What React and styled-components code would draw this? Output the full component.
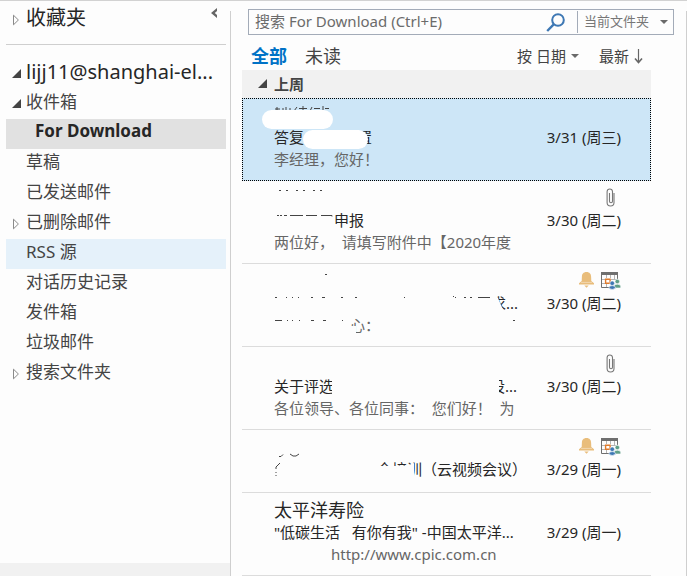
import styled, { createGlobalStyle, css } from 'styled-components'

const GlobalStyle = createGlobalStyle`
  * {
    box-sizing: border-box;
  }

  body {
    margin: 0;
    background: #fdfdfd;
    color: #262626;
    font-family: "Noto Sans", "Noto Sans CJK SC", sans-serif;
    font-size: 15px;
  }

  button, input, select {
    font-family: inherit;
    color: inherit;
    border: 0;
    padding: 0;
    background: none;
  }
`;

const Page = styled.div`
  display: grid;
  grid-template-columns: 230px 1px minmax(0, 1fr) 1px;
  min-height: 100vh;
  border-top: 1px solid #d2d2d2;
`;

const Divider = styled.div`
  margin-top: 10px;
  background: #cfcfcf;
`;

/* ---------- folder pane ---------- */

const Sidebar = styled.aside`
  display: flex;
  flex-direction: column;
`;

const FolderNav = styled.nav`
  flex: 1;
  padding: 0 4px 0 6px;
`;

const Favorites = styled.div`
  display: flex;
  align-items: flex-start;
  justify-content: space-between;
  height: 44px;
  margin-bottom: 10px;
  border-bottom: 1px solid #cfcfcf;
`;

const CollapseButton = styled.button`
  display: flex;
  padding: 7px 9px;
`;

const Folder = styled.a`
  display: flex;
  align-items: center;
  height: 30px;
  padding-bottom: 4px;
  font-size: 17px;
  line-height: 24px;
  white-space: nowrap;
  text-decoration: none;
  color: #444;

  ${({ $top }) => $top && css`
    height: 34px;
    padding-bottom: 0;
    font-size: 20px;
    color: #262626;
  `}
  ${({ $hover }) => $hover && css`
    background: #e5f1fa;
  `}
  ${({ $selected }) => $selected && css`
    padding-left: 9px;
    padding-bottom: 6px;
    background: #e1e1e1;
    font-weight: 700;
    color: #262626;
  `}
`;

const Toggle = styled.span`
  display: flex;
  align-items: center;
  width: 20px;
  padding: 3px 0 0 6px;
`;

const SidebarFooter = styled.div`
  height: 13px;
  background: #f1f1f1;
`;

/* ---------- message pane ---------- */

const Main = styled.main`
  display: flex;
  flex-direction: column;
`;

const SearchBar = styled.form`
  display: flex;
  align-items: center;
  height: 26px;
  margin: 8px 12px 0 17px;
  border: 1px solid #a3abb8;
`;

const SearchInput = styled.input`
  flex: 1;
  min-width: 0;
  height: 24px;
  padding: 0 0 3px 6px;
  font-size: 15px;
  outline: none;

  &::placeholder {
    color: #6b6b6b;
    opacity: 1;
  }
`;

const SearchButton = styled.button`
  display: flex;
  padding: 0 12px 0 8px;
`;

const ScopeBox = styled.div`
  display: flex;
  align-items: center;
  width: 96px;
  height: 22px;
  padding-right: 5px;
  border-left: 1px solid #a3abb8;
`;

const Scope = styled.select`
  flex: 1;
  height: 22px;
  padding: 0 0 2px 6px;
  appearance: none;
  font-size: 13px;
  color: #777;
`;

const Toolbar = styled.div`
  display: flex;
  align-items: center;
  height: 35px;
  margin: 0 43px 0 20px;
  padding-top: 7px;
`;

const Tab = styled.button`
  margin-right: 18px;
  font-size: 18px;
  line-height: 26px;
  font-weight: ${({ $active }) => ($active ? 700 : 400)};
  color: ${({ $active }) => ($active ? '#0072c6' : '#444')};
`;

const SortButton = styled.button`
  display: flex;
  align-items: center;
  gap: 5px;
  margin-left: ${({ $push }) => ($push ? 'auto' : '20px')};
  font-size: 15px;
  line-height: 22px;
  color: #444;
`;

const List = styled.section`
  margin: 0 35px 0 11px;
`;

const GroupHeader = styled.h2`
  display: flex;
  align-items: center;
  gap: 7px;
  height: 28px;
  margin: 0;
  padding: 0 0 2px 16px;
  background: #f1f1f1;
  font-size: 15px;
  font-weight: 700;
  color: #444;
`;

const Messages = styled.ul`
  margin: 0;
  padding: 0;
  list-style: none;
`;

const Message = styled.li`
  position: relative;
  display: grid;
  grid-template-columns: minmax(0, 1fr) 77px;
  column-gap: 26px;
  height: ${({ $short }) => ($short ? 63 : 83)}px;
  padding: 5px 30px 0 32px;
  border-bottom: 1px solid #dcdcdc;

  ${({ $selected }) => $selected && css`
    padding: 4px 29px 0 31px;
    border: 1px dotted #000;
    background: #cde6f7;
  `}
`;

const Sender = styled.div`
  height: 23px;
  font-size: 18px;
  line-height: 24px;
`;

const Subject = styled.div`
  height: 22px;
  line-height: 22px;
  white-space: pre;
`;

const Preview = styled(Subject)`
  color: #666;
`;

const Space = styled.span`
  display: inline-block;
  width: ${({ $w }) => $w}px;
`;

const Meta = styled.div`
  white-space: nowrap;
`;

const Icons = styled.div`
  display: flex;
  align-items: center;
  justify-content: flex-end;
  gap: 7px;
  height: 23px;
  padding-bottom: 1px;
`;

const When = styled.time`
  display: block;
  line-height: 22px;
  text-align: right;
`;

const Cover = styled.svg`
  position: absolute;
  top: 0;
  left: 0;
  width: 300px;
  height: 81px;
  pointer-events: none;
`;

/* ---------- icons ---------- */

const Expanded = () => (
  <svg width="9" height="9" viewBox="0 0 9 9"><path d="M9 0v9H0z" fill="#444" /></svg>
);

const Collapsed = () => (
  <svg width="8" height="12" viewBox="0 0 8 12">
    <path d="M1.5 1.2v9.6L6.4 6z" fill="none" stroke="#8a8a8a" />
  </svg>
);

const Caret = () => (
  <svg width="8" height="4" viewBox="0 0 8 4"><path d="M0 0h8L4 4z" fill="#6a6a6a" /></svg>
);

const Magnifier = () => (
  <svg width="19" height="19" viewBox="0 0 19 19" fill="none" stroke="#3e78b4">
    <circle cx="12" cy="7" r="5.8" strokeWidth="2" />
    <path d="M8 11.2L1.2 18" strokeWidth="2.4" />
  </svg>
);

const ArrowDown = () => (
  <svg width="9" height="15" viewBox="0 0 9 15" fill="none" stroke="#666">
    <path d="M4.5 0v13" strokeWidth="1.2" />
    <path d="M1 9.5l3.5 4 3.5-4" strokeWidth="1.6" />
  </svg>
);

const Paperclip = () => (
  <svg width="20" height="19" viewBox="0 0 20 19" fill="none" stroke="#777" strokeWidth="1.1">
    <path d="M8.500 5v8.200a1.500 1.500 0 0 0 3 0V3.500A2.700 2.700 0 0 0 8.800 1 2.700 2.700 0 0 0 6.100 3.500V14.500a3.400 3.400 0 0 0 6.900 0V5" />
  </svg>
);

const Bell = () => (
  <svg width="15" height="16" viewBox="0 0 15 16" fill="#e9bd7b">
    <path d="M7.500 0C4.300 0 2.900 2.200 2.900 4.500L2.700 9 0 11.300v1.200h15v-1.200L12.300 9l-.2-4.500C12.100 2.200 10.700 0 7.500 0z" />
    <path d="M5.300 13.600h4.400L7.500 15.800z" />
    <path d="M2 10.400h11" stroke="#f6e3c6" strokeWidth=".7" />
  </svg>
);

const Meeting = () => (
  <svg width="20" height="19" viewBox="0 0 20 19">
    <path d="M5.500 4v3M9.500 4v3M13.500 4v5M1 8.500h3M10 8.500h6M1 12.500h3M5.500 13v3" fill="none" stroke="#b5b5b5" />
    <path d="M.5 3v13.500H8M16.500 3v5" fill="none" stroke="#6f6f6f" />
    <path d="M0 1h17v3H0z" fill="#6f6f6f" />
    <path d="M4.600 8.200h4.500v4H4.600z" fill="#fff" stroke="#e07b2c" strokeWidth="1.400" />
    <g stroke="#fdfdfd" strokeWidth=".6">
      <circle cx="16.300" cy="10.500" r="2.300" fill="#5f9f88" />
      <path d="M13 17v-1.500q0-2.300 3.300-2.300t3.400 2.300V17z" fill="#5f9f88" />
      <circle cx="11.200" cy="12.200" r="2.300" fill="#3e78b4" />
      <path d="M7.800 17.200q0-2.600 3.400-2.600t3.400 2.600q-3.400 2.600-6.800 0z" fill="#3e78b4" />
    </g>
  </svg>
);

/* ---------- data ---------- */

const folders = [
  { name: '收件箱', icon: <Expanded /> },
  { name: 'For Download', selected: true },
  { name: '草稿' },
  { name: '已发送邮件' },
  { name: '已删除邮件', icon: <Collapsed /> },
  { name: 'RSS 源', hover: true },
  { name: '对话历史记录' },
  { name: '发件箱' },
  { name: '垃圾邮件' },
  { name: '搜索文件夹', icon: <Collapsed /> },
];

// marks: leftover strokes of erased text, erased: shapes painted over the text
const messages = [
  {
    selected: true,
    subject: <>答复<Space $w={53} />置</>,
    preview: '李经理，您好！',
    date: '3/31 (周三)',
    marks: 'M34 8v4M32 10h5M40 9v3M43 8v4M47 9v3M54 8l-3 4M56 9.500h8M60 7v5M69 8l-2 4M71 9.500h6M80 7v5M82 9.500h4',
    erased: (
      <g fill="#fff">
        <rect x="19" y="11" width="71" height="19" rx="9.500" />
        <rect x="60" y="31" width="65" height="19" rx="9.500" />
      </g>
    ),
  },
  {
    subject: <><Space $w={60} />申报</>,
    preview: '两位好，  请填写附件中【2020年度',
    date: '3/30 (周二)',
    icons: <Paperclip />,
    marks: 'M37 9.500h2M44 9.500h2M54 9.500h2M61 9.500h2M71 9.500h2M78 9.500h2M35 34.500h2M38 34.500h2M42 34.500h3M48 34.500h13M64 34.500h11M79 34.500h11v1',
  },
  {
    subject: <><Space $w={217} />求...</>,
    preview: <><Space $w={76} />心：</>,
    date: '3/30 (周二)',
    icons: <><Bell /><Meeting /></>,
    marks: 'M83 10.500h2M33 33.500h2M44 33.500h1M50 33.500h1M56 33.500h1M69 33.500h2M80 33.500h3M99 33.500h2M113 33.500h2M162 33.500h1M211 32.500h1M213 33.500h1M222 33.500h2M228 33.500h2M236 33.500h12M33 56.500h7M45 56.500h1M50 56.500h1M57 56.500h1M69 56.500h3M81 56.500h3M100 56.500h1M271 56.500h2',
    erased: <path d="M245 34h11l6 14h-17zM107 62h7v8h-7z" fill="#fdfdfd" />,
  },
  {
    subject: <>关于评选<Space $w={156} />设...</>,
    preview: '各位领导、各位同事：  您们好！  为',
    date: '3/30 (周二)',
    icons: <Paperclip />,
    erased: <path d="M90 30h4v18h-4zM244 30h13v18h-13z" fill="#fdfdfd" />,
  },
  {
    short: true,
    subject: <><Space $w={103} />全培训（云视频会议）</>,
    date: '3/29 (周一)',
    icons: <><Bell /><Meeting /></>,
    marks: 'M37 26.500h2l2-2M48 24l3 2h3l3-2M38 33l-4 4v2M34 42v1M34 45v1',
    erased: <path d="M130 36h34l8-3v14h-42z" fill="#fdfdfd" />,
  },
  {
    sender: '太平洋寿险',
    subject: '"低碳生活   有你有我" -中国太平洋...',
    preview: <><Space $w={57} />http://www.cpic.com.cn</>,
    date: '3/29 (周一)',
  },
];

const FolderPane = () => (
  <Sidebar>
    <FolderNav>
      <Favorites>
        <Folder href="#favorites" $top><Toggle><Collapsed /></Toggle>收藏夹</Folder>
        <CollapseButton aria-label="折叠">
          <svg width="6" height="10" viewBox="0 0 6 10">
            <path d="M6 0v3L3.800 5 6 7v3L0 5z" fill="#666" />
          </svg>
        </CollapseButton>
      </Favorites>
      <Folder href="#account" $top><Toggle><Expanded /></Toggle>lijj11@shanghai-el...</Folder>
      {folders.map(({ name, icon, selected, hover }) => (
        <Folder key={name} href={`#${name}`} $selected={selected} $hover={hover}>
          <Toggle>{icon}</Toggle>
          {name}
        </Folder>
      ))}
    </FolderNav>
    <SidebarFooter />
  </Sidebar>
);

const MessageRow = ({ sender, subject, preview, date, icons, marks, erased, selected, short }) => (
  <Message $selected={selected} $short={short}>
    <div>
      <Sender>{sender}</Sender>
      <Subject>{subject}</Subject>
      {preview && <Preview>{preview}</Preview>}
    </div>
    <Meta>
      <Icons>{icons}</Icons>
      <When>{date}</When>
    </Meta>
    {(marks || erased) && (
      <Cover aria-hidden="true">
        <path d={marks} fill="none" stroke="#444" />
        {erased}
      </Cover>
    )}
  </Message>
);

export default function App() {
  return (
    <>
      <GlobalStyle />
      <Page>
        <FolderPane />
        <Divider />
        <Main>
          <SearchBar>
            <SearchInput aria-label="搜索" placeholder="搜索 For Download (Ctrl+E)" />
            <SearchButton type="button" aria-label="搜索"><Magnifier /></SearchButton>
            <ScopeBox>
              <Scope aria-label="搜索范围">
                <option>当前文件夹</option>
              </Scope>
              <Caret />
            </ScopeBox>
          </SearchBar>
          <Toolbar>
            <Tab $active>全部</Tab>
            <Tab>未读</Tab>
            <SortButton $push>按 日期 <Caret /></SortButton>
            <SortButton>最新 <ArrowDown /></SortButton>
          </Toolbar>
          <List>
            <GroupHeader><Expanded />上周</GroupHeader>
            <Messages>
              {messages.map((message, i) => <MessageRow key={i} {...message} />)}
            </Messages>
          </List>
        </Main>
        <Divider />
      </Page>
    </>
  )
}
